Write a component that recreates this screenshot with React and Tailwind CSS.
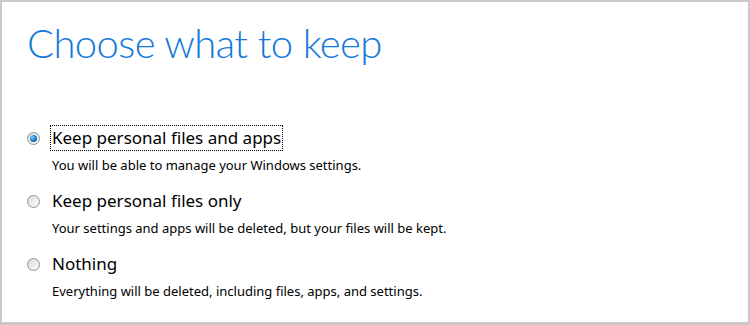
import React from 'react';

const options = [
  { label: 'Keep personal files and apps', desc: 'You will be able to manage your Windows settings.', checked: true },
  { label: 'Keep personal files only', desc: 'Your settings and apps will be deleted, but your files will be kept.' },
  { label: 'Nothing', desc: 'Everything will be deleted, including files, apps, and settings.' },
];

const Radio = ({ checked }) => (
  <span className="relative flex h-[13px] w-[13px] shrink-0 items-center justify-center rounded-full border border-[#8e8f8f] bg-gradient-to-br from-[#dcdcdc] to-[#fbfbfb]">
    {checked && (
      <span className="h-[7px] w-[7px] rounded-full bg-[radial-gradient(circle_at_35%_35%,#7ed0ff,#0a6fbf_60%,#04426f)]" />
    )}
  </span>
);

export default function App() {
  return (
    <div className="h-[325px] w-[750px] border-2 border-b-[3px] border-[#c9c9c9] bg-white font-['Segoe_UI','Noto_Sans',sans-serif] text-black">
      <h1 className="pl-[25px] pt-[15px] font-['Segoe_UI_Light','Lato',sans-serif] text-[40px] font-light leading-[52px] tracking-[-0.6px] text-[#1479d7]">
        Choose what to keep
      </h1>
      <div className="mt-[57px] flex flex-col gap-[15px] pl-[25px]">
        {options.map(o => (
          <div key={o.label} className="flex flex-col">
            <div className="flex items-center gap-[11px]">
              <Radio checked={o.checked} />
              <span className={`px-[1px] text-[17px] leading-[24px] ${o.checked ? 'outline outline-1 outline-dotted outline-black' : ''}`}>
                {o.label}
              </span>
            </div>
            <div className="mt-[6px] pl-[25px] text-[13px] leading-[18px]">{o.desc}</div>
          </div>
        ))}
      </div>
    </div>
  );
}
